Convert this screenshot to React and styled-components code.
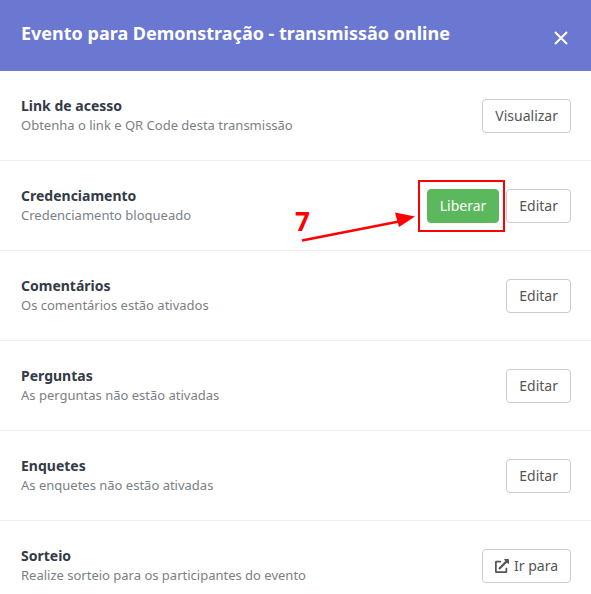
import React from 'react';
import styled, { createGlobalStyle } from 'styled-components';
import { FaExternalLinkAlt } from 'react-icons/fa';

const rows = [
  { title: 'Link de acesso', text: 'Obtenha o link e QR Code desta transmissão', action: 'Visualizar' },
  { title: 'Credenciamento', text: 'Credenciamento bloqueado', action: 'Editar', release: true },
  { title: 'Comentários', text: 'Os comentários estão ativados', action: 'Editar' },
  { title: 'Perguntas', text: 'As perguntas não estão ativadas', action: 'Editar' },
  { title: 'Enquetes', text: 'As enquetes não estão ativadas', action: 'Editar' },
  { title: 'Sorteio', text: 'Realize sorteio para os participantes do evento', action: 'Ir para', external: true },
];

export default function App() {
  return (
    <>
      <GlobalStyle />
      <Modal>
        <Header>
          <HeaderTitle>Evento para Demonstração - transmissão online</HeaderTitle>
          <CloseIcon viewBox="0 0 14 14" aria-label="Fechar">
            <path d="M1 1l12 12M13 1L1 13" stroke="#fff" strokeWidth="2" fill="none" />
          </CloseIcon>
        </Header>
        {rows.map((row) => (
          <Row key={row.title}>
            <div>
              <RowTitle>{row.title}</RowTitle>
              <RowText>{row.text}</RowText>
            </div>
            <Actions>
              {row.release && (
                <Highlight>
                  <ReleaseButton>Liberar</ReleaseButton>
                </Highlight>
              )}
              <Button>
                {row.external && <FaExternalLinkAlt size={14} />}
                {row.action}
              </Button>
            </Actions>
          </Row>
        ))}
        <StepNumber>7</StepNumber>
        <Arrow viewBox="0 0 125 40">
          <path d="M1 35.5L98 16.5" stroke="#f00" strokeWidth="2.6" fill="none" />
          <path d="M114 11.5L94 7.5L98 22Z" fill="#f00" />
        </Arrow>
      </Modal>
    </>
  );
}

const GlobalStyle = createGlobalStyle`
  html, body {
    margin: 0;
    padding: 0;
    background: #fff;
  }
  body {
    font-family: 'Noto Sans', 'Open Sans', sans-serif;
  }
`;

const Modal = styled('div')`
  position: relative;
  width: 591px;
  height: 594px;
  overflow: hidden;
  background: #fff;
`;

const Header = styled('div')`
  display: flex;
  justify-content: space-between;
  height: 71px;
  padding: 0 23px 0 21px;
  box-sizing: border-box;
  background: #6a78d1;
  color: #fff;
`;

const HeaderTitle = styled('h1')`
  margin: 21px 0 0;
  font-size: 18px;
  line-height: 25px;
  font-weight: 700;
`;

const CloseIcon = styled('svg')`
  width: 14px;
  height: 14px;
  margin-top: 31px;
`;

const Row = styled('div')`
  display: flex;
  justify-content: space-between;
  align-items: center;
  height: 90px;
  padding: 0 20px 0 21px;
  box-sizing: border-box;
  border-bottom: 1px solid #eeeeee;
`;

const RowTitle = styled('div')`
  font-size: 14px;
  line-height: 20px;
  font-weight: 700;
  color: #343a46;
`;

const RowText = styled('div')`
  font-size: 13px;
  line-height: 19px;
  color: #7b7f85;
`;

const Actions = styled('div')`
  display: flex;
  align-items: center;
  gap: 5px;
`;

const Button = styled('button')`
  display: inline-flex;
  align-items: center;
  gap: 5px;
  height: 34px;
  padding: 0 12px;
  border: 1px solid #cccccc;
  border-radius: 4px;
  background: #fff;
  color: #555;
  font: 400 14px 'Noto Sans', 'Open Sans', sans-serif;
`;

const ReleaseButton = styled(Button)`
  border-color: #5cb85c;
  background: #5cb85c;
  color: #fff;
`;

const Highlight = styled('div')`
  display: flex;
  margin: -9px -4px -9px 0;
  padding: 7px 4px 7px 7px;
  border: 2px solid #f00;
`;

const StepNumber = styled('div')`
  position: absolute;
  left: 295px;
  top: 204px;
  font-size: 26px;
  line-height: 34px;
  font-weight: 700;
  color: #f00;
`;

const Arrow = styled('svg')`
  position: absolute;
  left: 301px;
  top: 205px;
  width: 125px;
  height: 40px;
`;
